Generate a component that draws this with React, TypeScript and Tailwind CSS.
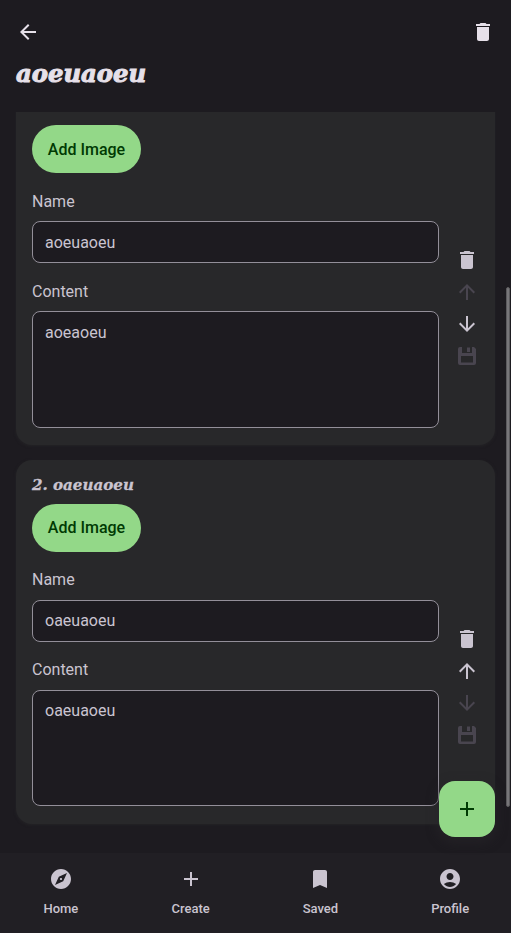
import React from "react";
import { MdArrowBack, MdDelete, MdArrowUpward, MdArrowDownward, MdExplore, MdAdd, MdBookmark, MdAccountCircle } from "react-icons/md";

function SaveIcon() {
  return (
    <svg viewBox="0 0 24 24" width="24" height="24" fill="currentColor" fillRule="evenodd">
      <path d="M5 3H7V9H17V3H19L21 5V19A2 2 0 0 1 19 21H5A2 2 0 0 1 3 19V5A2 2 0 0 1 5 3ZM6 12V18.5H18V12ZM12 3.5H15V8H12Z" />
    </svg>
  );
}

function Section({ title, value, content, first }: { title?: string; value: string; content: string; first?: boolean }) {
  const line = first ? "leading-[26px]" : "leading-6";
  return (
    <section className="flex h-[364px] shrink-0 rounded-2xl bg-[#28282a] pl-4 shadow-[0_1px_3px_0_rgba(40,40,42,0.7)]">
      <div className="flex h-full w-[407px] flex-col pt-3">
        <h2 className="h-6 font-['DejaVu_Serif',serif] text-[15.1px] leading-[26px] font-bold text-[#cac4d0] italic [-webkit-text-stroke:0.3px_#cac4d0]">{title}</h2>
        <button className={`mt-2 h-12 w-[109px] shrink-0 rounded-full bg-[#93d888] text-[16px] font-medium text-[#003a03] ${first ? "pt-[2px]" : ""}`}>Add Image</button>
        <label className={`mt-4 h-6 text-[16px] ${line}`}>Name</label>
        <div className={`mt-2 flex h-[42px] items-center rounded-lg border border-[#938f99] bg-[#1d1b20] px-3 text-[16px] ${first ? "pt-[2px]" : ""}`}>{value}</div>
        <label className={`mt-4 h-6 text-[16px] ${line}`}>Content</label>
        <div className={`mt-2 h-[116.4px] rounded-lg border border-[#938f99] bg-[#1d1b20] px-3 pt-2 text-[16px] ${line}`}>{content}</div>
      </div>
      <div className="ml-4 flex flex-col gap-2 pt-[167px]">
        <MdDelete size={24} />
        <MdArrowUpward size={24} className={first ? "text-[#49454f]" : ""} />
        <MdArrowDownward size={24} className={first ? "" : "text-[#49454f]"} />
        <span className="text-[#49454f]"><SaveIcon /></span>
      </div>
    </section>
  );
}

const tabs = [
  { label: "Home", Icon: MdExplore },
  { label: "Create", Icon: MdAdd },
  { label: "Saved", Icon: MdBookmark },
  { label: "Profile", Icon: MdAccountCircle },
];

export default function App() {
  return (
    <div className="relative flex h-[933px] w-[511px] flex-col overflow-hidden bg-[#1d1b20] font-[Roboto,sans-serif] text-[#cac4d0]">
      <header className="h-28 shrink-0 px-4 pt-5 text-[#e6e0e9]">
        <div className="flex justify-between">
          <MdArrowBack size={24} />
          <MdDelete size={24} />
        </div>
        <h1 className="mt-[14px] font-['DejaVu_Serif',serif] text-[24.3px] leading-8 font-bold italic [-webkit-text-stroke:1px_#e6e0e9]">aoeuaoeu</h1>
      </header>
      <main className="flex h-[741px] shrink-0 flex-col overflow-hidden px-4">
        <div className="-mt-[30.6px] flex flex-col gap-[14.6px]">
          <Section value="aoeuaoeu" content="aoeaoeu" first />
          <Section title="2. oaeuaoeu" value="oaeuaoeu" content="oaeuaoeu" />
        </div>
      </main>
      <nav className="-mx-1 grid h-20 shrink-0 grid-cols-4 bg-[#211f24]">
        {tabs.map(({ label, Icon }) => (
          <div key={label} className="flex flex-col items-center pt-[14px]">
            <Icon size={24} />
            <span className="mt-[10px] text-[13px] leading-4 font-medium">{label}</span>
          </div>
        ))}
      </nav>
      <div className="absolute top-[287px] right-[1px] h-[520px] w-[4px] rounded-full border border-[#5c5b5e] bg-[#78777a]" />
      <button className="absolute top-[781px] left-[439px] flex h-14 w-14 items-center justify-center rounded-2xl bg-[#93d888] text-[#003a03] shadow-[0_4px_10px_3px_rgba(40,38,42,0.5)]">
        <MdAdd size={24} />
      </button>
    </div>
  );
}
